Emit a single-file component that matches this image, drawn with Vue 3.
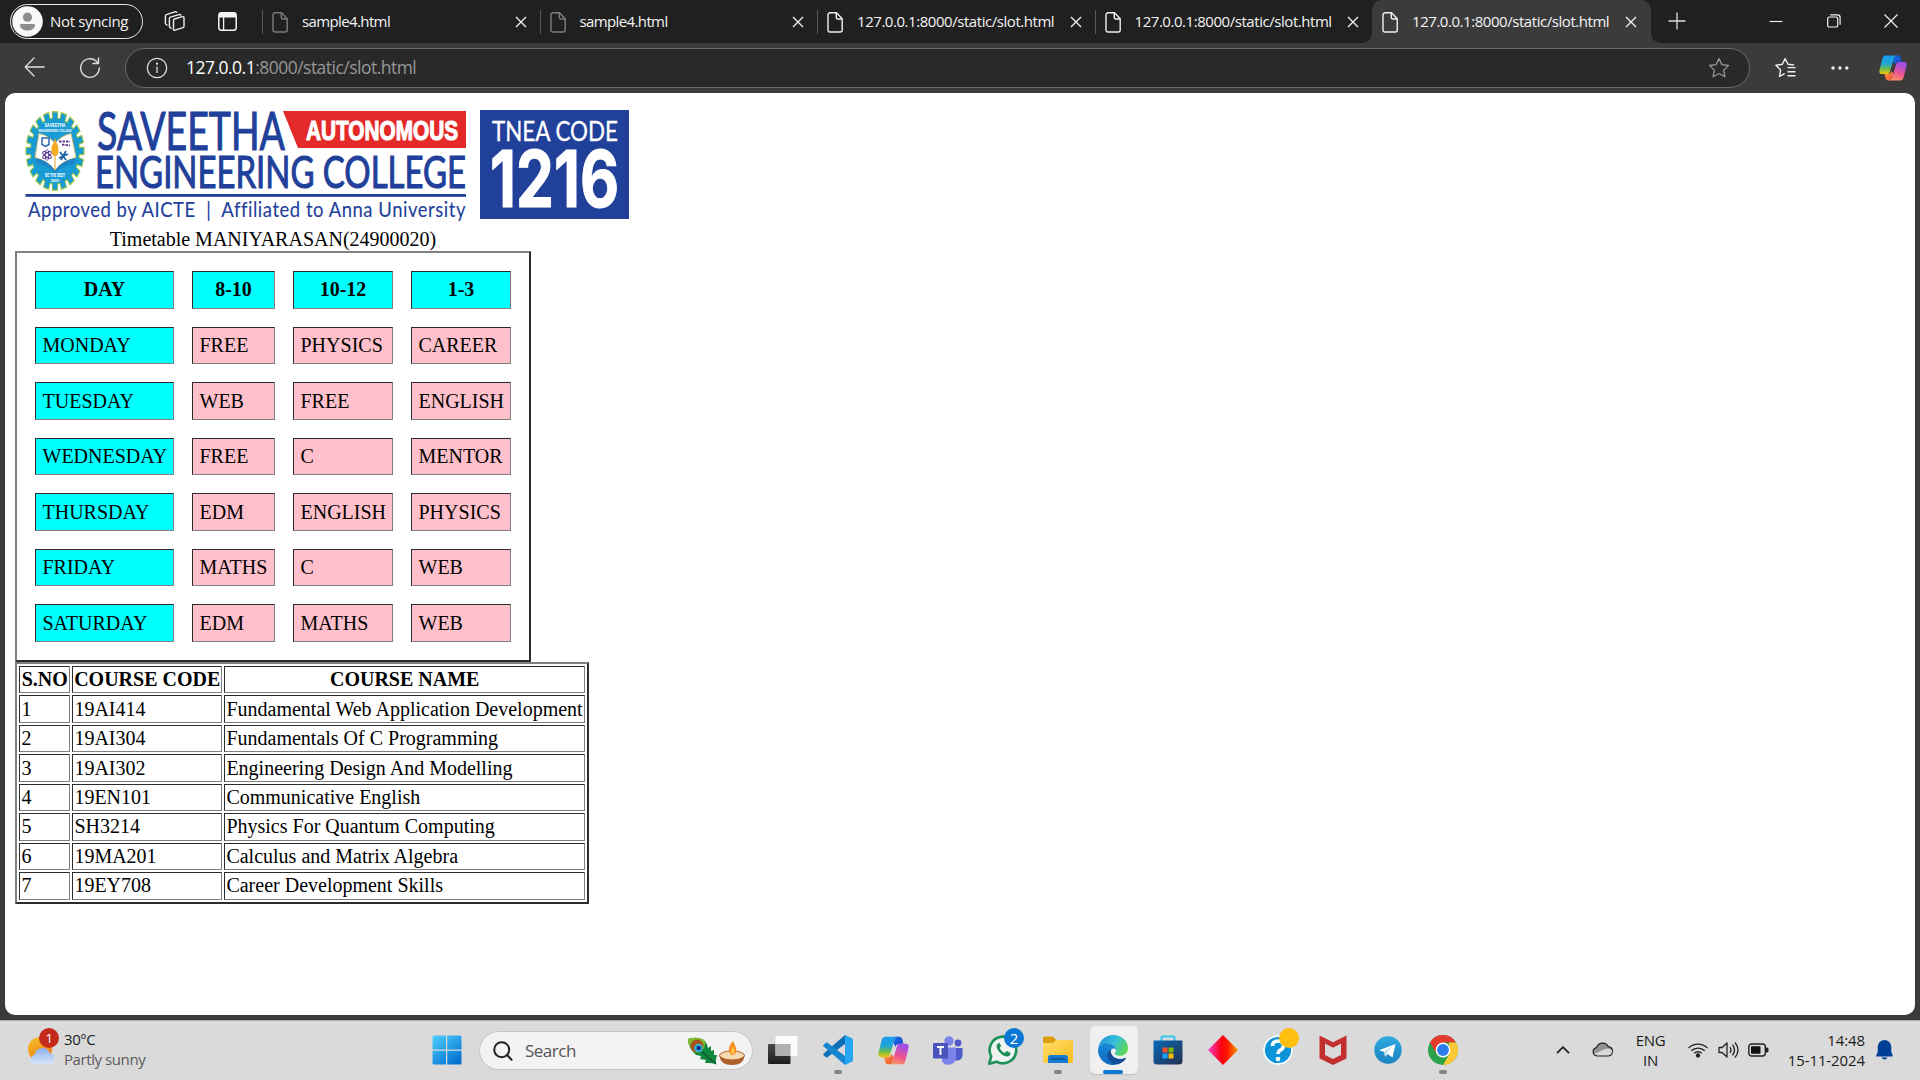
<script setup>
const tabs = [
  { title: 'sample4.html', dim: true, short: true },
  { title: 'sample4.html', dim: true, short: true },
  { title: '127.0.0.1:8000/static/slot.html' },
  { title: '127.0.0.1:8000/static/slot.html' },
  { title: '127.0.0.1:8000/static/slot.html', active: true },
]

const timetable = [
  ['DAY', '8-10', '10-12', '1-3'],
  ['MONDAY', 'FREE', 'PHYSICS', 'CAREER'],
  ['TUESDAY', 'WEB', 'FREE', 'ENGLISH'],
  ['WEDNESDAY', 'FREE', 'C', 'MENTOR'],
  ['THURSDAY', 'EDM', 'ENGLISH', 'PHYSICS'],
  ['FRIDAY', 'MATHS', 'C', 'WEB'],
  ['SATURDAY', 'EDM', 'MATHS', 'WEB'],
]

const courses = [
  ['S.NO', 'COURSE CODE', 'COURSE NAME'],
  ['1', '19AI414', 'Fundamental Web Application Development'],
  ['2', '19AI304', 'Fundamentals Of C Programming'],
  ['3', '19AI302', 'Engineering Design And Modelling'],
  ['4', '19EN101', 'Communicative English'],
  ['5', 'SH3214', 'Physics For Quantum Computing'],
  ['6', '19MA201', 'Calculus and Matrix Algebra'],
  ['7', '19EY708', 'Career Development Skills'],
]

const teeth = Array.from({ length: 20 }, (_, i) => i * 18)
</script>

<template>
  <div class="screen">
    <svg class="defs" width="0" height="0">
      <defs>
        <linearGradient id="cpA" x1="0" y1="0" x2="0" y2="1">
          <stop offset="0" stop-color="#1a9bf0" /><stop offset=".45" stop-color="#1fa6d8" />
          <stop offset=".72" stop-color="#6cbb4b" /><stop offset="1" stop-color="#f5c60c" />
        </linearGradient>
        <linearGradient id="cpB" x1="0.3" y1="0" x2="0" y2="1">
          <stop offset="0" stop-color="#a34fe6" /><stop offset=".5" stop-color="#f0528f" />
          <stop offset="1" stop-color="#fba55a" />
        </linearGradient>
        <linearGradient id="cpC" x1="0" y1="0" x2="1" y2="1">
          <stop offset="0" stop-color="#1b6fe8" /><stop offset="1" stop-color="#1a3fc4" />
        </linearGradient>
        <linearGradient id="cpD" x1="0" y1="0" x2="1" y2="1">
          <stop offset="0" stop-color="#f9a23b" /><stop offset="1" stop-color="#ee4b3a" />
        </linearGradient>
        <symbol id="copilot" viewBox="0 0 28 26">
          <path d="M16 .5h3.2c1.5 0 2.2.8 2.6 2.2l1.2 4.1h-3.4c-2 0-3.2 1-3.8 3L14 6z" fill="url(#cpC)" />
          <path d="M12 25.5H9.3c-1.500 0-2.300-.8-2.700-2.200L5.400 19h3.300c2 0 3.100-1 3.700-3l2.100 3z" fill="url(#cpD)" />
          <path d="M6.800.5h11.400c-2 0-2.800 1.200-3.400 3.200l-3.900 13c-.5 1.600-1.500 2.300-3 2.300H3C.8 19-.1 17.500.5 15L3.400 3.400C4 1.400 5 .5 6.800.5z" fill="url(#cpA)" />
          <path d="M21.200 25.500H9.800c2 0 2.800-1.200 3.400-3.200l3.900-13c.5-1.600 1.500-2.300 3-2.300H25c2.200 0 3.100 1.500 2.500 4l-2.900 11.600c-.6 2-1.600 2.900-3.400 2.900z" fill="url(#cpB)" />
        </symbol>
      </defs>
    </svg>

    <header class="tabstrip">
      <div class="profile">
        <svg width="31" height="31" viewBox="0 0 31 31">
          <circle cx="15.500" cy="15.500" r="15.300" fill="#f8f8f8" />
          <circle cx="15.500" cy="11.200" r="4.600" fill="#8d8d8d" />
          <path d="M9 18h13a1 1 0 0 1 1 1c0 3.600-3.500 5.500-7.500 5.500S8 22.600 8 19a1 1 0 0 1 1-1z" fill="#8d8d8d" />
        </svg>
        <span>Not syncing</span>
      </div>
      <svg class="workspaces" width="22" height="22" viewBox="0 0 22 22" fill="none" stroke="#eee" stroke-width="1.400" stroke-linejoin="round" stroke-linecap="round">
        <path d="M9.500 10.300q0-1 1-1.300l8-2.300q1.500-.4 1.500 1v8.500q0 1-1 1.400l-7.900 2.600q-1.600.5-1.600-1z" />
        <path d="M7 18.200l-1-.8q-.6-.5-.6-1.500V8.500q0-1 1-1.300l8.500-2.600q1-.3 2 .4" />
        <path d="M3 15l-1-.8q-.6-.5-.6-1.300V6q0-1 1-1.300l8.400-2.800q1-.3 2 .4" />
      </svg>
      <svg class="tabactions" width="19" height="19" viewBox="0 0 19 19">
        <rect x=".8" y=".8" width="17.400" height="17.400" rx="2.600" fill="none" stroke="#f4f4f4" stroke-width="1.500" />
        <path d="M1 5.500V3a2 2 0 0 1 2-2h13a2 2 0 0 1 2 2v2.500z" fill="#f4f4f4" />
        <path d="M5.600 5v13" stroke="#f4f4f4" stroke-width="1.300" />
      </svg>
      <nav class="tabs">
        <div v-for="(t, i) in tabs" :key="i" class="tab" :class="{ active: t.active, short: t.short }">
          <svg class="file" width="16" height="21" viewBox="0 0 16 21" fill="none" :stroke="t.dim ? '#7c7c7c' : '#f1f1f1'" stroke-width="1.400" stroke-linejoin="round">
            <path d="M3 .8h6.500l5.700 6v11.200a2 2 0 0 1-2 2H3a2 2 0 0 1-2-2V2.800a2 2 0 0 1 2-2z" />
            <path d="M9.300 1v4.500a1.500 1.500 0 0 0 1.500 1.500H15" />
          </svg>
          <span class="title">{{ t.title }}</span>
          <svg class="x" width="12" height="12" viewBox="0 0 12 12" stroke="#eee" stroke-width="1.400"><path d="M1 1l10 10M11 1L1 11" /></svg>
        </div>
      </nav>
      <svg class="plus" width="18" height="18" viewBox="0 0 18 18" stroke="#ddd" stroke-width="1.300"><path d="M9 .5v17M.5 9h17" /></svg>
      <div class="winctl">
        <svg width="14" height="14" viewBox="0 0 14 14" stroke="#f2f2f2" stroke-width="1.100"><path d="M.5 7.500h13" /></svg>
        <svg width="14" height="14" viewBox="0 0 14 14" fill="none" stroke="#f2f2f2" stroke-width="1.200"><rect x=".7" y="3" width="10" height="10" rx="1.600" /><path d="M3.200.8h7.300a2.600 2.600 0 0 1 2.600 2.600v7.400" /></svg>
        <svg width="14" height="14" viewBox="0 0 14 14" stroke="#f2f2f2" stroke-width="1.200"><path d="M.5.5l13 13M13.500.5l-13 13" /></svg>
      </div>
    </header>

    <div class="toolbar">
      <svg class="back" width="22" height="20" viewBox="0 0 22 20" fill="none" stroke="#dedede" stroke-width="1.300" stroke-linecap="round" stroke-linejoin="round"><path d="M10 1L1.200 10l8.800 9M1.200 10h19" /></svg>
      <svg class="reload" width="22" height="22" viewBox="0 0 22 22" fill="none" stroke="#dedede" stroke-width="1.400" stroke-linecap="round" stroke-linejoin="round"><path d="M20.300 11a9.300 9.300 0 1 1-3.200-7L19.300 6.300M19.500 1v5.500h-5.500" /></svg>
      <div class="address">
        <svg width="22" height="22" viewBox="0 0 22 22" fill="none" stroke="#dcdcdc" stroke-width="1.300"><circle cx="11" cy="11" r="9.700" /><path d="M11 9.500v6.500" /><circle cx="11" cy="6.700" r=".5" fill="#dcdcdc" /></svg>
        <div class="url"><b>127.0.0.1</b>:8000/static/slot.html</div>
        <svg width="22" height="22" viewBox="0 0 22 22" fill="none" stroke="#969696" stroke-width="1.300" stroke-linejoin="round"><path d="M11 1.500l2.900 6.100 6.600.9-4.800 4.600 1.200 6.600-5.900-3.200-5.900 3.200 1.200-6.600L1.500 8.500l6.600-.9z" /></svg>
      </div>
      <svg class="favs" width="22" height="22" viewBox="0 0 22 22" fill="none" stroke="#eee" stroke-width="1.400" stroke-linejoin="round" stroke-linecap="round"><path d="M19.500 8l-5.500-.8-2.900-5.700-2.700 5.800-6.500 1 4.700 4.600-1.100 6.500 4.700-2.600M14 10.600h7M14 14.700h7M14 18.800h7" /></svg>
      <svg class="dots" width="18" height="4" viewBox="0 0 18 4" fill="#eee"><circle cx="2" cy="2" r="1.700" /><circle cx="9" cy="2" r="1.700" /><circle cx="15.800" cy="2" r="1.700" /></svg>
      <svg class="cp" width="28" height="26"><use href="#copilot" /></svg>
    </div>

    <div class="viewport">
      <main class="page">
        <svg class="banner" width="616" height="126" viewBox="15 103 616 126">
          <g transform="translate(55 151) scale(1 1.350)">
            <rect v-for="a in teeth" :key="a" x="-2.600" y="-29" width="5.200" height="8" fill="#199bd4" stroke="#9bc53d" stroke-width="1" :transform="`rotate(${a})`" />
            <circle r="24.500" fill="#199bd4" stroke="#9bc53d" stroke-width=".8" />
            <rect v-for="a in teeth" :key="'i' + a" x="-2.200" y="-28" width="4.400" height="8" fill="#199bd4" :transform="`rotate(${a})`" />
          </g>
          <path d="M39 133.500q10 2 16 10q6-8 16-10l5 24q-14 3-21 13q-7-10-20-13z" fill="#fff" stroke="#e9b455" stroke-width=".8" />
          <path d="M35 158q13 2 20 12.500q7-10.500 21-12.500l-2 6q-12 1-19 9.500q-7-8.500-18-9.500z" fill="#1d86c8" />
          <g fill="none" stroke="#5a3a96" stroke-width="1">
            <path d="M42 138h7v6.500l-3.500 2-3.500-2z" stroke="#2d6ab4" stroke-width="1.500" />
            <path d="M59 141.500l11 0M62 144.500l8 1" stroke-width="1.800" stroke-dasharray="2.500 1" />
            <ellipse cx="47" cy="155" rx="5" ry="2" transform="rotate(35 47 155)" /><ellipse cx="47" cy="155" rx="5" ry="2" transform="rotate(-35 47 155)" /><ellipse cx="47" cy="155" rx="1.800" ry="5.500" />
            <path d="M60 152l6 8M66 151l-5 9M59 158l9-4" stroke="#1f66a8" stroke-width="1.800" />
          </g>
          <path d="M55 139v31" stroke="#e4a323" stroke-width="1" />
          <path d="M53.500 143l1.500-4 1.500 4q2 2 2 5v5l-2 3h-3l-2-3v-5q0-3 2-5z" fill="#f2ab24" />
          <g fill="#fff" font-family="Open Sans, sans-serif" font-weight="700" text-anchor="middle">
            <text x="55" y="126.500" font-size="6" textLength="21" lengthAdjust="spacingAndGlyphs">SAVEETHA</text>
            <text x="55" y="132" font-size="4" textLength="33" lengthAdjust="spacingAndGlyphs">ENGINEERING COLLEGE</text>
            <text x="55" y="176.500" font-size="4.500" textLength="20" lengthAdjust="spacingAndGlyphs">BE THE BEST</text>
            <text x="55" y="181.500" font-size="4">2001</text>
          </g>
          <g fill="#21409a" stroke="#21409a" font-family="Lato, sans-serif">
            <text x="97" y="149.500" font-size="52.500" stroke-width="1.100" textLength="188" lengthAdjust="spacingAndGlyphs">SAVEETHA</text>
            <text x="95" y="187.500" font-size="44.500" stroke-width="1.100" textLength="371" lengthAdjust="spacingAndGlyphs">ENGINEERING COLLEGE</text>
            <text x="28" y="216.700" font-size="20.500" stroke-width=".1" letter-spacing=".6" textLength="438" lengthAdjust="spacingAndGlyphs">Approved by AICTE&#160; | &#160;Affiliated to Anna University</text>
          </g>
          <path d="M283 111h183v37H298z" fill="#e32a29" />
          <text x="306" y="139.500" font-family="Liberation Sans, sans-serif" font-weight="700" font-size="27.500" fill="#fff" stroke="#fff" stroke-width="1.200" textLength="152" lengthAdjust="spacingAndGlyphs">AUTONOMOUS</text>
          <rect x="25.500" y="194" width="440.500" height="2.800" fill="#21409a" />
          <rect x="480" y="110" width="149" height="109" fill="#21409a" />
          <text x="492" y="140.500" font-family="Lato, sans-serif" font-size="26" fill="#fff" stroke="#fff" stroke-width=".3" textLength="126" lengthAdjust="spacingAndGlyphs">TNEA CODE</text>
          <text x="490" y="207" font-family="Inter, sans-serif" font-weight="700" font-size="78" fill="#fff" stroke="#fff" stroke-width="1" textLength="129" lengthAdjust="spacingAndGlyphs">1216</text>
        </svg>

        <div class="caption">Timetable MANIYARASAN(24900020)</div>
        <div class="timetable">
          <template v-for="(row, r) in timetable" :key="r">
            <div v-for="(c, k) in row" :key="k" class="cell" :class="{ head: r === 0, cyan: r === 0 || k === 0 }">{{ c }}</div>
          </template>
        </div>
        <div class="courses">
          <template v-for="(row, r) in courses" :key="r">
            <div v-for="(c, k) in row" :key="k" class="cell" :class="{ head: r === 0 }">{{ c }}</div>
          </template>
        </div>
      </main>
    </div>

    <footer class="taskbar">
      <div class="weather">
        <svg width="34" height="40" viewBox="27 1027 34 40">
          <defs>
            <linearGradient id="sun" x1="0" y1="0" x2="0.600" y2="1"><stop offset="0" stop-color="#f6c52c" /><stop offset="1" stop-color="#ef7a12" /></linearGradient>
            <linearGradient id="cld" x1="0" y1="0" x2="0" y2="1"><stop offset="0" stop-color="#8fb0ee" /><stop offset="1" stop-color="#d6e6fb" /></linearGradient>
          </defs>
          <circle cx="40" cy="1049" r="12" fill="url(#sun)" />
          <path d="M35 1064a5 5 0 0 1-.5-9.500a8 8 0 0 1 15.200-1.500a5.600 5.600 0 0 1 0 11z" fill="url(#cld)" />
          <circle cx="49" cy="1038" r="10" fill="#c42b1c" />
          <text x="49.300" y="1042.700" font-family="Open Sans, sans-serif" font-size="13" text-anchor="middle" fill="#fff">1</text>
        </svg>
        <div class="wtext"><span>30°C</span><span class="soft">Partly sunny</span></div>
      </div>

      <svg class="start" width="30" height="30" viewBox="0 0 30 30">
        <defs><linearGradient id="win" x1="0" y1="0" x2=".7" y2="1"><stop offset="0" stop-color="#4fd0fc" /><stop offset="1" stop-color="#0673d3" /></linearGradient></defs>
        <path d="M2 .5h12v14H.5V2A1.500 1.500 0 0 1 2 .5zM15.200.5H28A1.500 1.500 0 0 1 29.500 2v12.500H15.200zM.5 15.700H14v13.800H2A1.500 1.500 0 0 1 .5 28zM15.200 15.700h14.300V28a1.500 1.500 0 0 1-1.500 1.500H15.200z" fill="url(#win)" />
      </svg>

      <div class="search">
        <svg width="20" height="20" viewBox="0 0 20 20" fill="none" stroke="#222" stroke-width="2" stroke-linecap="round"><circle cx="8.700" cy="8.700" r="7.500" /><path d="M14.300 14.300l4.300 4.500" /></svg>
        <span>Search</span>
        <svg class="festive" width="60" height="30" viewBox="688 1034 60 30">
          <path d="M689 1037q9-3 16 1q3 3 4 8l3-2 0 5 3-1v5l3 0-1 4 0 5-6-1-5 0 1-3-6-1 1-3-5-1q-8-7-8-16z" fill="#12883b" />
          <path d="M689 1037q9-3 16 1q2 4 0 8-4 6-10 4-6-5-6-13z" fill="#86b92b" />
          <circle cx="698" cy="1044" r="6.500" fill="#a8521f" /><circle cx="699.500" cy="1046" r="4.300" fill="#2cb6dc" /><circle cx="699.700" cy="1046" r="2.300" fill="#162a8a" />
          <path d="M703 1050l14 12" stroke="#0b5a38" stroke-width="1.500" />
          <ellipse cx="733" cy="1053.500" rx="12.500" ry="4.500" fill="#f6dcb4" stroke="#b5602a" stroke-width="1" />
          <path d="M720.500 1054q6 4 12.500 4t12.500-4q-1 9-12.500 9t-12.500-9z" fill="#ad5f2c" />
          <path d="M734 1039q-8 9-1 14.500q8-2 1-14.500z" fill="#f79222" /><path d="M734 1045q-3 4-.5 8q3-2 .5-8z" fill="#ffc84e" />
        </svg>
      </div>

      <div class="apps">
        <div class="app">
          <svg width="30" height="30" viewBox="0 0 30 30">
            <defs><linearGradient id="tv" x1="0" y1="0" x2="0" y2="1"><stop offset="0" stop-color="#4a4a4a" /><stop offset="1" stop-color="#1d1d1d" /></linearGradient></defs>
            <rect x="0" y="9" width="22.500" height="20" rx="1" fill="url(#tv)" /><rect x="7.500" y="1" width="22" height="20" rx="1" fill="#fff" opacity=".9" /><path d="M7.500 9h15v12h-15z" fill="#b0b0b0" />
          </svg>
        </div>
        <div class="app dot">
          <svg width="30" height="30" viewBox="0 0 30 30">
            <path d="M22 0l7 3.200a2 2 0 0 1 1 1.800v20a2 2 0 0 1-1 1.800L22 30z" fill="#26a5f2" />
            <path d="M22 0v9L4.500 22.200a1.500 1.500 0 0 1-1.900-.1L.7 20.300a1.300 1.300 0 0 1 0-1.900z" fill="#0f6fb4" />
            <path d="M22 30v-9L4.500 7.800a1.500 1.500 0 0 0-1.900.1L.7 9.700a1.300 1.300 0 0 0 0 1.900z" fill="#1788d0" />
          </svg>
        </div>
        <div class="app"><svg width="31" height="29"><use href="#copilot" /></svg></div>
        <div class="app">
          <svg width="30" height="30" viewBox="0 0 30 30">
            <circle cx="25" cy="8" r="3.400" fill="#5059c9" /><path d="M20 13h9.500v7a5.500 5.500 0 0 1-8 5z" fill="#5059c9" />
            <circle cx="16" cy="6" r="4.700" fill="#7b83eb" /><path d="M9 12.500h14v9.500a7.500 7.500 0 0 1-14 4z" fill="#7b83eb" />
            <rect x="0" y="8" width="15" height="15.500" rx="1.300" fill="#4b53bc" /><path d="M4 12h7M7.500 12v8" stroke="#fff" stroke-width="1.900" />
          </svg>
        </div>
        <div class="app">
          <svg width="44" height="44" viewBox="0 0 44 44">
            <path d="M8.200 35.700l2-7.400A13.300 13.300 0 1 1 15.600 33.700z" fill="#eef3ef" stroke="#1f8f58" stroke-width="2.600" stroke-linejoin="round" />
            <path d="M17 15.500c-2 1.500-1.800 4 .2 7 2.300 3.500 5.500 5.700 8.500 6 2.300.2 4-1.500 4-3.500l-4-2-1.800 1.900c-2.200-.8-4.300-2.800-5.200-5l1.400-1.800-1.700-3.300z" fill="#1f8f58" />
            <circle cx="33" cy="10" r="10" fill="#0a78d4" /><text x="33" y="15.500" font-family="Open Sans, sans-serif" font-size="15" text-anchor="middle" fill="#fff">2</text>
          </svg>
        </div>
        <div class="app dot">
          <svg width="30" height="28" viewBox="0 0 30 28">
            <defs><linearGradient id="fold" x1="0" y1="0" x2="1" y2="1"><stop offset="0" stop-color="#ffdc6c" /><stop offset="1" stop-color="#f9bc1c" /></linearGradient></defs>
            <path d="M0 2A1.500 1.500 0 0 1 1.500.5H10l3.500 4H30V8H0z" fill="#dd9d10" />
            <path d="M0 7h10l3-3h17v21.500a1.500 1.500 0 0 1-1.500 1.500h-27A1.500 1.500 0 0 1 0 25.500z" fill="url(#fold)" />
            <path d="M5 27v-5.500A2.500 2.500 0 0 1 7.500 19h15a2.500 2.500 0 0 1 2.500 2.500V27z" fill="#147bd0" /><path d="M8 23h14" stroke="#0b4a86" stroke-width="1.300" />
          </svg>
        </div>
        <div class="app current">
          <svg width="30" height="30" viewBox="0 0 30 30">
            <defs>
              <linearGradient id="edA" x1="0" y1=".3" x2="1" y2=".7"><stop offset="0" stop-color="#2496dc" /><stop offset=".5" stop-color="#34c1d8" /><stop offset="1" stop-color="#62d947" /></linearGradient>
              <linearGradient id="edB" x1="0" y1="0" x2="0" y2="1"><stop offset="0" stop-color="#1a8bd8" /><stop offset="1" stop-color="#1168be" /></linearGradient>
            </defs>
            <path d="M.2 13.500C1.200 5.500 7.500 0 15 0c8.700 0 15 6 15 13 0 4.500-3.300 7.800-8 7.800-4 0-5.800-1.400-5.300-2.500 1-1 1.300-2 1.300-3.300C18 11 13 8 8.500 8 4.500 8 1.500 10.500.2 13.500z" fill="url(#edA)" />
            <path d="M0 15.500C.3 10.500 4.500 8 8.500 8c4.500 0 9.500 3 9.500 7-2-2.300-5.500-2-5.500 2.500C12.500 25 19 29.500 17 30 8 31 0 24 0 15.500z" fill="url(#edB)" />
            <path d="M12.500 14.500c-3 2-4 6-2 10 2 3.500 6 5.500 9.500 4.700 3.500-.9 6.300-3 7.800-5.500.4-.7-.2-1.100-.9-.8C20 26 12.500 22 12.500 14.500z" fill="#124f98" />
          </svg>
        </div>
        <div class="app">
          <svg width="30" height="30" viewBox="0 0 30 30">
            <defs><linearGradient id="st" x1="0" y1="0" x2="1" y2="1"><stop offset="0" stop-color="#0669b8" /><stop offset="1" stop-color="#26304f" /></linearGradient></defs>
            <path d="M8.500 6V2.500a1 1 0 0 1 1-1h11a1 1 0 0 1 1 1V6" fill="none" stroke="#30c1f1" stroke-width="2" />
            <path d="M.5 5.500h29V26a3.500 3.500 0 0 1-3.500 3.500H4A3.500 3.500 0 0 1 .5 26z" fill="url(#st)" />
            <path d="M9.500 12.500h5v5h-5z" fill="#f25022" /><path d="M15.500 12.500h5v5h-5z" fill="#7fba00" /><path d="M9.500 18.500h5v5h-5z" fill="#1ba4ef" /><path d="M15.500 18.500h5v5h-5z" fill="#ffb900" />
          </svg>
        </div>
        <div class="app">
          <svg width="30" height="30" viewBox="0 0 30 30">
            <defs><linearGradient id="dia"><stop offset="0" stop-color="#f33fc8" /><stop offset=".45" stop-color="#fb0010" /><stop offset=".65" stop-color="#fb1b00" /><stop offset="1" stop-color="#fc9a00" /></linearGradient></defs>
            <path d="M15 0l15 15-15 15L0 15z" fill="url(#dia)" />
          </svg>
        </div>
        <div class="app">
          <svg width="44" height="44" viewBox="0 0 44 44">
            <circle cx="22" cy="22" r="14" fill="#0b94d8" stroke="#f5f9fb" stroke-width="1.800" />
            <path d="M16.500 18q0-5 5.500-5t5.500 4.500q0 3-3 4.500-2.500 1.500-2.500 4" fill="none" stroke="#fff" stroke-width="3.600" /><circle cx="22" cy="31" r="2.300" fill="#fff" />
            <circle cx="33" cy="10" r="10" fill="#ffbf10" />
          </svg>
        </div>
        <div class="app">
          <svg width="28" height="30" viewBox="0 0 28 30"><path d="M.5.500L14 7.300 27.500.5v23L14 30 .5 23.500zM6 8.500V20l8 4 8-4V8.500l-8 4.300z" fill="#c1302f" fill-rule="evenodd" /></svg>
        </div>
        <div class="app">
          <svg width="28" height="28" viewBox="0 0 28 28">
            <defs><linearGradient id="tg" x1="0" y1="0" x2="0" y2="1"><stop offset="0" stop-color="#2fa9e2" /><stop offset="1" stop-color="#1a83bf" /></linearGradient></defs>
            <circle cx="14" cy="14" r="13.700" fill="url(#tg)" /><path d="M5 14.200L21.500 8l-3 13.500-5-3.500-2.500 2.700-.8-4.600z" fill="#fff" /><path d="M10.500 16l7.500-5.500-6 6.500-.8 3z" fill="#a9cfe6" />
          </svg>
        </div>
        <div class="app dot">
          <svg width="30" height="30" viewBox="0 0 30 30">
            <circle cx="15" cy="15" r="15" fill="#2ba24c" />
            <path d="M2 7.500A15 15 0 0 1 28 7.500H15L8.500 18.800z" fill="#e33b2e" />
            <path d="M28 7.500A15 15 0 0 1 15 30l6.500-11.300L21 7.500z" fill="#fcc934" />
            <circle cx="15" cy="15" r="7.400" fill="#fff" /><circle cx="15" cy="15" r="5.900" fill="#2a7de8" />
          </svg>
        </div>
      </div>

      <div class="tray">
        <svg width="14" height="8" viewBox="0 0 14 8" fill="none" stroke="#222" stroke-width="1.800"><path d="M1 7.200l6-6 6 6" /></svg>
        <svg class="cloud" width="22" height="16" viewBox="0 0 22 16">
          <path d="M5 15a4.200 4.200 0 0 1-.5-8.300A6.300 6.300 0 0 1 16.300 5.700 4.700 4.700 0 0 1 16.500 15z" fill="#939393" stroke="#222" stroke-width="1.200" />
          <path d="M2.500 13L13 8q4-1.500 7 1.500a4 4 0 0 1-3.500 4.800H5z" fill="#d9d9d9" />
        </svg>
        <div class="lang"><span>ENG</span><span>IN</span></div>
        <svg class="wifi" width="20" height="16" viewBox="0 0 20 16" fill="none" stroke="#222" stroke-width="1.300"><path d="M.6 6a13.300 13.300 0 0 1 18.800 0M3.300 8.800a9.500 9.500 0 0 1 13.400 0M6 11.400a5.700 5.700 0 0 1 8 0" /><circle cx="10" cy="13.500" r="1.500" fill="#222" /></svg>
        <svg class="vol" width="21" height="18" viewBox="0 0 21 18" fill="none" stroke="#222" stroke-width="1.300" stroke-linejoin="round"><path d="M1 6.500h3.200L9 2v14l-4.800-4.500H1zM12 6q2 3 0 6M14.500 3.700q4 5.300 0 10.600M17 1.500q6 7.500 0 15" /></svg>
        <svg class="bat" width="21" height="14" viewBox="0 0 21 14"><rect x=".8" y="1" width="16.500" height="12" rx="2.800" fill="none" stroke="#222" stroke-width="1.400" /><rect x="3" y="3.200" width="9.500" height="7.600" rx=".8" fill="#111" /><path d="M18 4.500h1a1.500 1.500 0 0 1 1.500 1.500v2a1.500 1.500 0 0 1-1.500 1.500h-1z" fill="#222" /></svg>
        <div class="clock"><span>14:48</span><span>15-11-2024</span></div>
        <svg class="bell" width="17" height="20" viewBox="0 0 17 20" fill="#003f96"><path d="M8.500 0a6.800 6.800 0 0 1 6.800 6.800v5.200l1.500 3.400q.2 1-.8 1.100H1q-1-.1-.8-1.100L1.700 12V6.800A6.800 6.800 0 0 1 8.500 0zM5.500 17.500h6q-.8 2-3 2t-3-2z" /></svg>
      </div>
    </footer>
  </div>
</template>

<style>
html, body { margin: 0; overflow: hidden; }
</style>

<style scoped>
* { box-sizing: border-box; }
svg { display: block; flex: none; }
.defs { position: absolute; }
.screen {
  width: 1920px; height: 1080px; overflow: hidden;
  display: flex; flex-direction: column;
  background: #3b3b3b;
  font-family: "Open Sans", "Noto Sans", sans-serif; font-size: 15px; white-space: nowrap;
}

.tabstrip { height: 43px; background: #202020; display: flex; color: #f3f3f3; flex: none; }
.profile {
  width: 133px; height: 35px; margin: 4px 0 0 10px; border: 1.500px solid #e8e8e8; border-radius: 18px;
  display: flex; align-items: center; gap: 7px; padding-left: 1px; letter-spacing: -.33px; line-height: 30px;
}
.profile span { padding-bottom: 1px; }
.workspaces { margin: 10px 0 0 21px; }
.tabactions { margin: 12px 0 0 32px; }
.tabs { display: flex; margin-left: 25px; }
.tab {
  width: 277.500px; height: 43px; display: flex; align-items: center; position: relative;
  padding: 0 0 2px 10px; letter-spacing: -.45px;
}
.tab.short { letter-spacing: -.62px; }
.tab::before { content: ""; position: absolute; left: 0; top: 10px; width: 1px; height: 24px; background: #5a5a5a; }
.file { margin-top: 3px; }
.title { margin-left: 14px; width: 212.500px; }
.x { margin-top: 2px; }
.tab.active { background: #3b3b3b; border-radius: 10px 10px 0 0; width: 279px; }
.tab.active::before, .tab.active::after {
  content: ""; position: absolute; top: auto; bottom: 0; width: 10px; height: 10px;
}
.tab.active::before { left: -10px; background: radial-gradient(circle at 0 0, #202020 9.500px, #3b3b3b 10.300px); }
.tab.active::after { right: -10px; background: radial-gradient(circle at 100% 0, #202020 9.500px, #3b3b3b 10.300px); }
.plus { margin: 12px 0 0 17px; }
.winctl { display: flex; gap: 43.500px; margin: 14px 0 0 83px; }

.toolbar { height: 50px; display: flex; flex: none; position: relative; }
.back { margin: 14px 0 0 24px; }
.reload { margin: 14px 0 0 33px; }
.address {
  margin: 5px 0 0 24px; width: 1625px; height: 40px; border: 1px solid #6a6a6a; border-radius: 20px;
  background: #292929; display: flex; align-items: center; padding: 0 19px 0 20px;
}
.url { flex: 1; margin-left: 18px; font-size: 17.500px; letter-spacing: -.52px; color: #979797; padding-bottom: 2px; }
.url b { font-weight: 400; color: #fff; }
.favs { margin: 14px 0 0 24px; }
.dots { margin: 23px 0 0 35px; }
.cp { margin: 12px 0 0 30px; }

.viewport { height: 922px; margin: 0 5px; background: #fff; border-radius: 10px; flex: none; }
.page { padding: 10px; font-family: "Liberation Serif", serif; font-size: 20px; color: #000; }
.caption { width: 516px; height: 22px; line-height: 20px; text-align: center; }
.cell { border: 1px solid; border-color: #2c2c2c #808080 #808080 #2c2c2c; display: flex; align-items: center; line-height: 22px; }
.head { justify-content: center; font-weight: 700; }
.timetable {
  width: 516px; height: 411px; border: 2px solid; border-color: #808080 #2c2c2c #2c2c2c #808080; padding: 18px;
  display: grid; grid-template-columns: 139px 83px 100px 100px; grid-auto-rows: 37.500px; gap: 18px;
}
.timetable .cell { background: #ffc0cb; padding: 0 6px 0 6.500px; }
.timetable .cell.head { padding: 0 6px 1px; }
.timetable .cyan { background: #0ff; }
.courses {
  width: 574px; height: 242px; border: 2px solid; border-color: #808080 #2c2c2c #2c2c2c #808080; padding: 2px;
  display: grid; grid-template-columns: 51px 150px 361px; grid-auto-rows: 27.450px; gap: 2px;
}
.courses .cell { padding: 0 1px 1px 1.400px; }

.taskbar {
  height: 60px; margin-top: 5px; background: #dadada; border-top: 1px solid #a9a9a9; flex: none;
  display: flex; color: #1d1d1d; position: relative;
}
.weather { width: 405px; padding: 6px 0 0 27px; display: flex; }
.wtext { display: flex; flex-direction: column; line-height: 20px; margin: 2px 0 0 3px; letter-spacing: -.42px; }
.soft { color: #5b5b5b; }
.start { margin: 14px 0 0 26.500px; }
.search {
  width: 274px; height: 39px; margin: 10px 0 0 17.500px; border: 1px solid #c4c4c4; border-radius: 20px; background: #f3f3f3;
  display: flex; align-items: center; padding: 0 5px 0 13px; font-size: 17px; letter-spacing: -.5px; color: #555;
}
.search span { flex: 1; margin-left: 12px; padding-bottom: 1px; }
.apps { display: flex; margin-left: 2.500px; }
.app { width: 55px; height: 58px; display: flex; align-items: center; justify-content: center; position: relative; }
.app.dot::after { content: ""; position: absolute; bottom: 5px; width: 8px; height: 4px; border-radius: 2px; background: #838383; }
.current::before {
  content: ""; position: absolute; left: 4px; top: 5px; width: 48px; height: 48px; border-radius: 5px;
  background: #f0f0f0; box-shadow: 0 1px 1px #bdbdbd;
}
.current svg { position: relative; }
.current::after { content: ""; position: absolute; bottom: 5px; width: 20px; height: 4px; border-radius: 2px; background: #0a78d4; }
.tray { display: flex; align-items: center; margin-left: 85px; height: 58px; }
.cloud { margin-left: 22px; margin-top: -3px; }
.lang, .clock { display: flex; flex-direction: column; line-height: 20px; }
.lang { width: 30px; text-align: center; margin-left: 22px; letter-spacing: -.3px; }
.wifi { margin-left: 22px; }
.vol { margin-left: 10px; }
.bat { margin-left: 9px; }
.clock { width: 80px; margin-left: 16.500px; text-align: right; letter-spacing: -.1px; }
.bell { margin-left: 10.500px; }
</style>
